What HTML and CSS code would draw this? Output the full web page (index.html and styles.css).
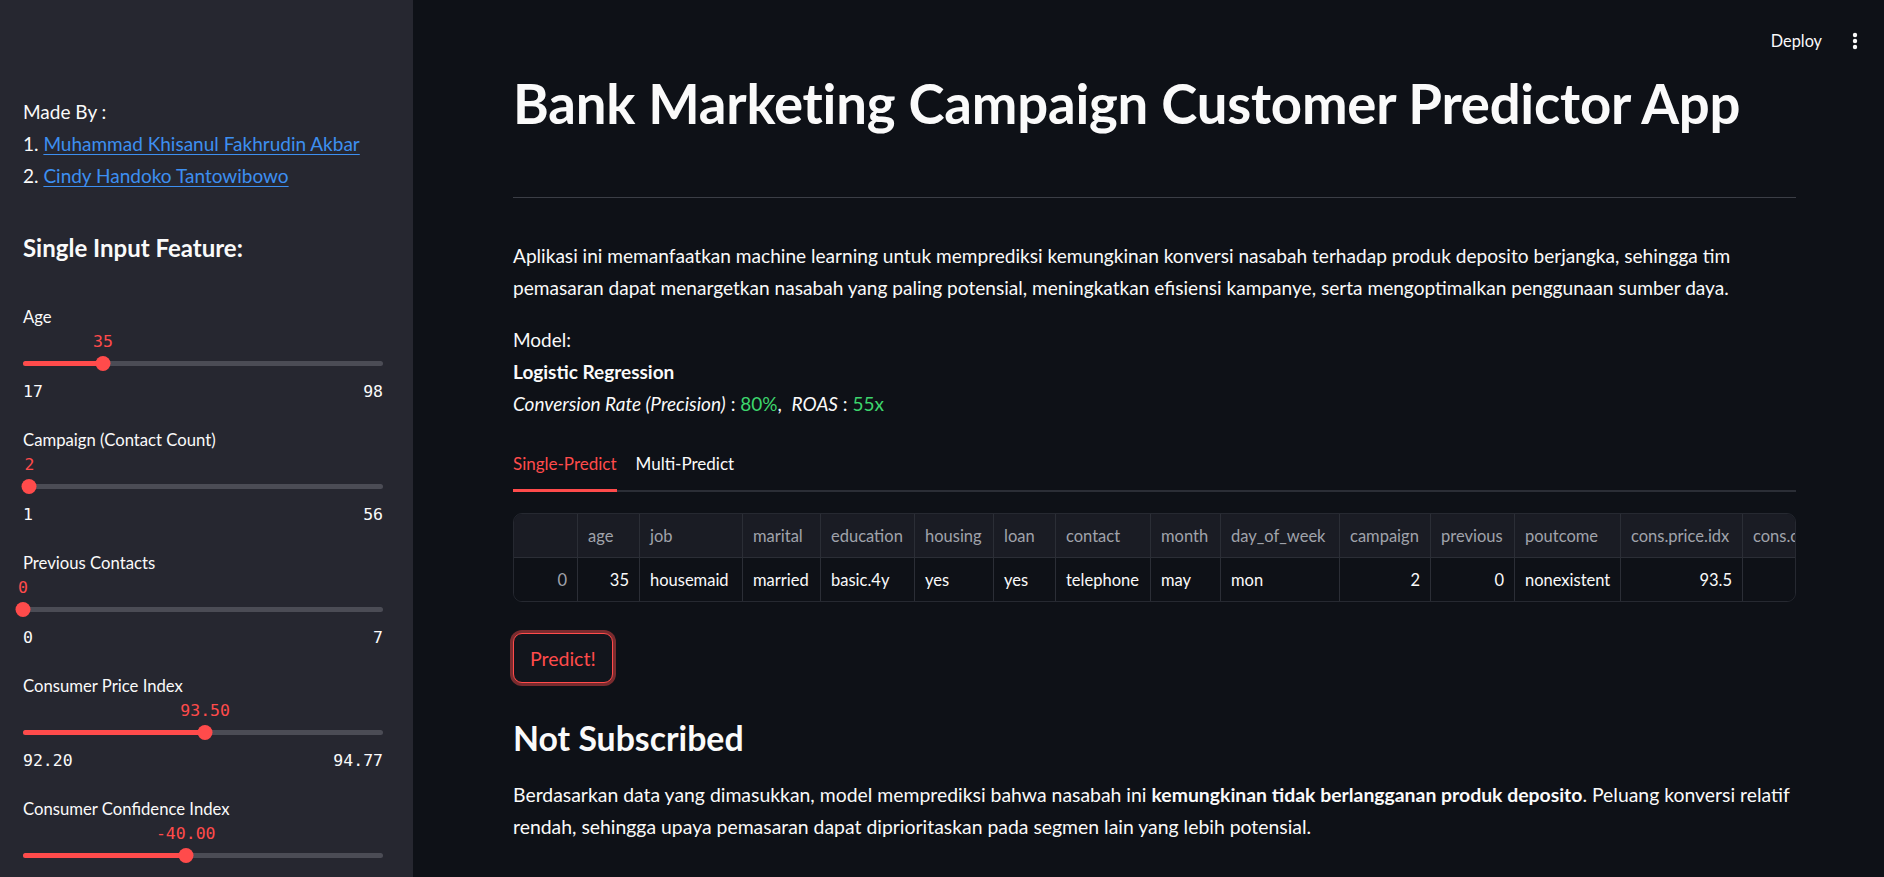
FILE: index.html
```html
<!DOCTYPE html>
<html lang="id">
<head>
<meta charset="utf-8">
<title>Bank Marketing Campaign Customer Predictor App</title>
<link rel="stylesheet" href="styles.css">
</head>
<body>
<aside class="sidebar">
  <div class="made-by">
    <p>Made By :</p>
    <p>1. <a href="#">Muhammad Khisanul Fakhrudin Akbar</a></p>
    <p>2. <a href="#">Cindy Handoko Tantowibowo</a></p>
  </div>
  <h3 class="side-title">Single Input Feature:</h3>

  <div class="slider">
    <div class="slider-label">Age</div>
    <div class="slider-area">
      <div class="track"><div class="fill" style="width:22.2%"></div></div>
      <div class="thumb" style="left:22.2%"></div>
      <div class="value" style="left:22.2%">35</div>
    </div>
    <div class="slider-range"><span>17</span><span>98</span></div>
  </div>

  <div class="slider">
    <div class="slider-label">Campaign (Contact Count)</div>
    <div class="slider-area">
      <div class="track"><div class="fill" style="width:1.8%"></div></div>
      <div class="thumb" style="left:1.8%"></div>
      <div class="value" style="left:1.8%">2</div>
    </div>
    <div class="slider-range"><span>1</span><span>56</span></div>
  </div>

  <div class="slider">
    <div class="slider-label">Previous Contacts</div>
    <div class="slider-area">
      <div class="track"><div class="fill" style="width:0%"></div></div>
      <div class="thumb" style="left:0%"></div>
      <div class="value" style="left:0%">0</div>
    </div>
    <div class="slider-range"><span>0</span><span>7</span></div>
  </div>

  <div class="slider">
    <div class="slider-label">Consumer Price Index</div>
    <div class="slider-area">
      <div class="track"><div class="fill" style="width:50.6%"></div></div>
      <div class="thumb" style="left:50.6%"></div>
      <div class="value" style="left:50.6%">93.50</div>
    </div>
    <div class="slider-range"><span>92.20</span><span>94.77</span></div>
  </div>

  <div class="slider">
    <div class="slider-label">Consumer Confidence Index</div>
    <div class="slider-area">
      <div class="track"><div class="fill" style="width:45.2%"></div></div>
      <div class="thumb" style="left:45.2%"></div>
      <div class="value" style="left:45.2%">-40.00</div>
    </div>
    <div class="slider-range"><span>-50.80</span><span>-26.90</span></div>
  </div>
</aside>

<main class="main">
  <header class="topbar">
    <span class="deploy">Deploy</span>
    <span class="kebab" aria-label="menu">
      <svg width="6" height="18" viewBox="0 0 6 18"><circle cx="3" cy="3" r="2.2" fill="#fafafa"/><circle cx="3" cy="9" r="2.2" fill="#fafafa"/><circle cx="3" cy="15" r="2.2" fill="#fafafa"/></svg>
    </span>
  </header>

  <div class="content">
    <h1 class="title">Bank Marketing Campaign Customer Predictor App</h1>
    <hr class="divider">
    <p class="intro">Aplikasi ini memanfaatkan machine learning untuk memprediksi kemungkinan konversi nasabah terhadap produk deposito berjangka, sehingga tim pemasaran dapat menargetkan nasabah yang paling potensial, meningkatkan efisiensi kampanye, serta mengoptimalkan penggunaan sumber daya.</p>
    <p class="model">Model:<br><strong>Logistic Regression</strong><br><em>Conversion Rate (Precision)</em> : <span class="green">80%</span>,&nbsp; <em>ROAS</em> : <span class="green">55x</span></p>

    <div class="tabs">
      <span class="tab active">Single-Predict</span>
      <span class="tab">Multi-Predict</span>
    </div>

    <div class="table">
      <div class="row head">
        <div class="cell"></div>
        <div class="cell">age</div>
        <div class="cell">job</div>
        <div class="cell">marital</div>
        <div class="cell">education</div>
        <div class="cell">housing</div>
        <div class="cell">loan</div>
        <div class="cell">contact</div>
        <div class="cell">month</div>
        <div class="cell">day_of_week</div>
        <div class="cell">campaign</div>
        <div class="cell">previous</div>
        <div class="cell">poutcome</div>
        <div class="cell">cons.price.idx</div>
        <div class="cell">cons.conf.idx</div>
      </div>
      <div class="row body">
        <div class="cell num idx">0</div>
        <div class="cell num">35</div>
        <div class="cell">housemaid</div>
        <div class="cell">married</div>
        <div class="cell">basic.4y</div>
        <div class="cell">yes</div>
        <div class="cell">yes</div>
        <div class="cell">telephone</div>
        <div class="cell">may</div>
        <div class="cell">mon</div>
        <div class="cell num">2</div>
        <div class="cell num">0</div>
        <div class="cell">nonexistent</div>
        <div class="cell num">93.5</div>
        <div class="cell num">-40.0</div>
      </div>
    </div>

    <button class="predict" type="button">Predict!</button>

    <h2 class="result">Not Subscribed</h2>
    <p class="result-text">Berdasarkan data yang dimasukkan, model memprediksi bahwa nasabah ini <strong>kemungkinan tidak berlangganan produk deposito</strong>. Peluang konversi relatif rendah, sehingga upaya pemasaran dapat diprioritaskan pada segmen lain yang lebih potensial.</p>
  </div>
</main>
</body>
</html>
```

FILE: styles.css
```css
* { box-sizing: border-box; }

html, body {
  margin: 0;
  padding: 0;
  height: 877px;
  overflow: hidden;
}

body {
  display: flex;
  background: #0e1117;
  color: #fafafa;
  font-family: "Lato", "Noto Sans", sans-serif;
}

/* ---------- Sidebar ---------- */
.sidebar {
  width: 413px;
  flex: 0 0 413px;
  background: #262730;
  padding: 96px 30px 0 23px;
  height: 877px;
  overflow: hidden;
}

.made-by p {
  margin: 0;
  font-size: 19px;
  line-height: 32px;
}

.made-by a {
  color: #3d8ff0;
  text-decoration: underline;
  text-underline-offset: 3px;
}

.side-title {
  margin: 41px 0 0;
  font-size: 24px;
  line-height: 30px;
  font-weight: 700;
}

.slider {
  margin-bottom: 27px;
}

.side-title + .slider {
  margin-top: 43px;
}

.slider-label {
  font-size: 16.7px;
  line-height: 22px;
}

.slider-area {
  position: relative;
  height: 42px;
  margin-top: 4px;
  padding-top: 29px;
}

.track {
  height: 5px;
  border-radius: 3px;
  background: #4b4c55;
  overflow: hidden;
}

.fill {
  height: 100%;
  background: #ff4b4b;
}

.thumb {
  position: absolute;
  top: 24px;
  width: 15px;
  height: 15px;
  border-radius: 50%;
  background: #ff4b4b;
  transform: translateX(-50%);
}

.value {
  position: absolute;
  top: 0;
  line-height: 20px;
  font-family: "DejaVu Sans Mono", "Liberation Mono", monospace;
  font-size: 16.5px;
  color: #ff4b4b;
  transform: translateX(-50%);
  white-space: nowrap;
}

.slider-range {
  display: flex;
  justify-content: space-between;
  margin-top: 8px;
  line-height: 20px;
  font-family: "DejaVu Sans Mono", "Liberation Mono", monospace;
  font-size: 16.5px;
  color: #fafafa;
}

/* ---------- Main ---------- */
.main {
  flex: 1 1 auto;
  min-width: 0;
  display: flex;
  flex-direction: column;
}

.topbar {
  height: 73px;
  display: flex;
  justify-content: flex-end;
  align-items: flex-start;
  gap: 30px;
  padding: 29px 26px 0 0;
}

.deploy {
  font-size: 16.3px;
  line-height: 24px;
}

.kebab {
  display: flex;
  align-items: center;
  height: 24px;
}

.content {
  padding: 0 88px 0 100px;
}

.title {
  margin: -3px 0 0;
  font-size: 54.5px;
  line-height: 66px;
  font-weight: 700;
  letter-spacing: -0.2px;
}

.divider {
  margin: 61px 0 0;
  border: 0;
  height: 1px;
  background: #3b3e46;
}

.intro {
  margin: 42px 0 0;
  font-size: 19.1px;
  line-height: 32px;
}

.model {
  margin: 20px 0 0;
  font-size: 19px;
  line-height: 32px;
}

.model strong { font-weight: 700; }

.green { color: #3dd56d; }

.tabs {
  margin-top: 32px;
  display: flex;
  gap: 19px;
  border-bottom: 2px solid #2b2e36;
}

.tab {
  font-size: 17px;
  line-height: 24px;
  padding-bottom: 13px;
  border-bottom: 3px solid transparent;
  margin-bottom: -2px;
}

.tab.active {
  color: #ff4b4b;
  border-bottom-color: #ff4b4b;
}

.table {
  margin-top: 21px;
  border: 1px solid #262931;
  border-radius: 9px;
  overflow: hidden;
  width: 100%;
}

.row {
  display: grid;
  grid-template-columns: 64px 62px 103px 78px 94px 79px 62px 95px 70px 119px 91px 84px 106px 122px 120px;
}

.row.head {
  height: 44px;
  background: #1a1c24;
  border-bottom: 1px solid #2b2e36;
  color: #a0a3ab;
}

.row.body {
  height: 43px;
  background: #0e1117;
  color: #fafafa;
}

.cell {
  border-right: 1px solid #2b2e36;
  padding: 0 10px;
  font-size: 16.5px;
  display: flex;
  align-items: center;
  white-space: nowrap;
  overflow: hidden;
}

.cell.num {
  justify-content: flex-end;
}

.cell.idx {
  color: #a0a3ab;
}

.predict {
  display: block;
  margin-top: 31px;
  height: 50px;
  padding: 0 16px;
  background: #12151c;
  border: 1px solid #ff4b4b;
  border-radius: 9px;
  box-shadow: 0 0 0 3px rgba(255, 75, 75, 0.45);
  color: #ff4b4b;
  font-family: "Lato", "Noto Sans", sans-serif;
  font-size: 19.5px;
}

.result {
  margin: 34px 0 0;
  font-size: 33.8px;
  line-height: 43px;
  font-weight: 700;
}

.result-text {
  margin: 19px 0 0;
  font-size: 19.4px;
  line-height: 32px;
}

.result-text strong { font-weight: 700; }
```
